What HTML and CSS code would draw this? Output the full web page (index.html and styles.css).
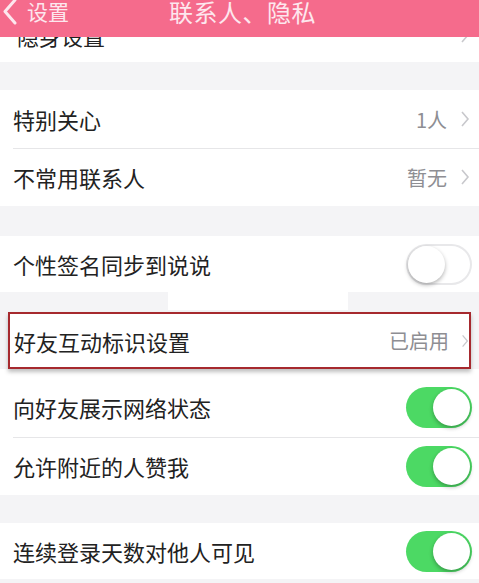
FILE: index.html
```html
<!DOCTYPE html>
<html lang="zh-CN">
<head>
  <meta charset="UTF-8">
  <meta name="viewport" content="width=device-width, initial-scale=1.0">
  <title>联系人、隐私</title>
  <link rel="stylesheet" href="styles.css">
</head>
<body>
  <div class="topbar">
    <div class="back">
      <svg class="back-icon" width="16" height="26" viewBox="0 0 16 26">
        <path d="M13 1 L3 12.5 L13 24" fill="none" stroke="#fde7ee" stroke-width="3" stroke-linecap="round" stroke-linejoin="round"/>
      </svg>
      <span>设置</span>
    </div>
    <div class="title">联系人、隐私</div>
    <div></div>
  </div>

  <div class="row cut">
    <span class="label">隐身设置</span>
    <span class="arrow">
      <svg width="10" height="16" viewBox="0 0 10 16"><path d="M2 1 L8 8 L2 15" fill="none" stroke="#c8c8cc" stroke-width="1.6"/></svg>
    </span>
  </div>

  <div class="gap"></div>

  <div class="group">
    <div class="row">
      <span class="label">特别关心</span>
      <span class="value">1人</span>
      <span class="arrow">
        <svg width="10" height="16" viewBox="0 0 10 16"><path d="M2 1 L8 8 L2 15" fill="none" stroke="#c8c8cc" stroke-width="1.6"/></svg>
      </span>
    </div>
    <div class="row">
      <span class="label">不常用联系人</span>
      <span class="value">暂无</span>
      <span class="arrow">
        <svg width="10" height="16" viewBox="0 0 10 16"><path d="M2 1 L8 8 L2 15" fill="none" stroke="#c8c8cc" stroke-width="1.6"/></svg>
      </span>
    </div>
  </div>

  <div class="gap tall"></div>

  <div class="group">
    <div class="row short">
      <span class="label">个性签名同步到说说</span>
      <span class="switch off"><span class="knob"></span></span>
    </div>
  </div>

  <div class="gap small">
    <div class="patch"></div>
  </div>

  <div class="group">
    <div class="row marked">
      <span class="label">好友互动标识设置</span>
      <span class="value">已启用</span>
      <span class="arrow">
        <svg width="10" height="16" viewBox="0 0 10 16"><path d="M2 1 L8 8 L2 15" fill="none" stroke="#c8c8cc" stroke-width="1.6"/></svg>
      </span>
    </div>
    <div class="row lower">
      <span class="label">向好友展示网络状态</span>
      <span class="switch"><span class="knob"></span></span>
    </div>
    <div class="row">
      <span class="label">允许附近的人赞我</span>
      <span class="switch"><span class="knob"></span></span>
    </div>
  </div>

  <div class="gap"></div>

  <div class="group">
    <div class="row short">
      <span class="label">连续登录天数对他人可见</span>
      <span class="switch"><span class="knob"></span></span>
    </div>
  </div>
</body>
</html>
```

FILE: styles.css
```css
* {
    margin: 0;
    padding: 0;
    box-sizing: border-box;
  }

  body {
    background-color: #f4f4f6;
    font-family: "Noto Sans CJK SC", "Noto Sans", sans-serif;
    color: #1c1c1c;
    width: 479px;
    overflow: hidden;
  }

  .topbar {
    height: 37px;
    background-color: #f56b8c;
    display: grid;
    grid-template-columns: 1fr auto 1fr;
    align-items: start;
    color: #fde7ee;
    overflow: hidden;
  }

  .back {
    display: flex;
    align-items: flex-start;
    padding-left: 2px;
    gap: 9px;
  }

  .back-icon {
    margin-top: -1px;
  }

  .back span {
    font-size: 21px;
    line-height: 22px;
  }

  .title {
    font-size: 24px;
    line-height: 24px;
    letter-spacing: 0.5px;
    padding-left: 6px;
  }

  .row {
    height: 58px;
    background-color: #fff;
    display: flex;
    align-items: center;
    padding: 0 7px 0 13px;
    position: relative;
  }

  .row + .row::before {
    content: "";
    position: absolute;
    top: 0;
    left: 13px;
    right: 0;
    height: 1px;
    background-color: #e6e6e8;
  }

  .row.short {
    height: 56px;
  }

  .row.cut {
    height: 25px;
    align-items: flex-start;
    overflow: hidden;
  }

  .row.cut .label {
    margin-top: -14px;
    padding-left: 4px;
  }

  .row.cut .arrow {
    margin-top: -10px;
  }

  .label {
    font-size: 22px;
    line-height: 24px;
    color: #222;
    flex: 1;
  }

  .value {
    font-size: 20px;
    color: #8e8e93;
    margin-right: 13px;
  }

  .arrow {
    display: flex;
    width: 12px;
  }

  .gap {
    height: 28px;
  }

  .gap.tall {
    height: 30px;
  }

  .gap.small {
    height: 20px;
  }

  .patch {
    width: 180px;
    height: 18px;
    margin-left: 168px;
    background-color: #fff;
  }

  .row.marked {
    height: 57px;
    margin: 0 8px 0 8px;
    padding: 0 0 0 4px;
    border: 2px solid #a6292e;
    box-shadow: 0 3px 4px rgba(0, 0, 0, 0.25);
    z-index: 1;
  }

  .row.marked .value {
    margin-right: 12px;
  }

  .row.marked .arrow {
    width: 8px;
    overflow: hidden;
  }

  .row.lower {
    height: 68px;
    padding-top: 8px;
  }

  .row.lower::before {
    display: none;
  }

  .switch {
    width: 66px;
    height: 41px;
    border-radius: 21px;
    background-color: #4cd964;
    display: flex;
    align-items: center;
    justify-content: flex-end;
    padding: 0 2px;
  }

  .knob {
    width: 37px;
    height: 37px;
    border-radius: 50%;
    background-color: #fff;
    box-shadow: 0 2px 4px rgba(0, 0, 0, 0.3);
  }

  .switch.off {
    background-color: #fff;
    box-shadow: inset 0 0 0 2px #e8e8ea;
    justify-content: flex-start;
  }
```
